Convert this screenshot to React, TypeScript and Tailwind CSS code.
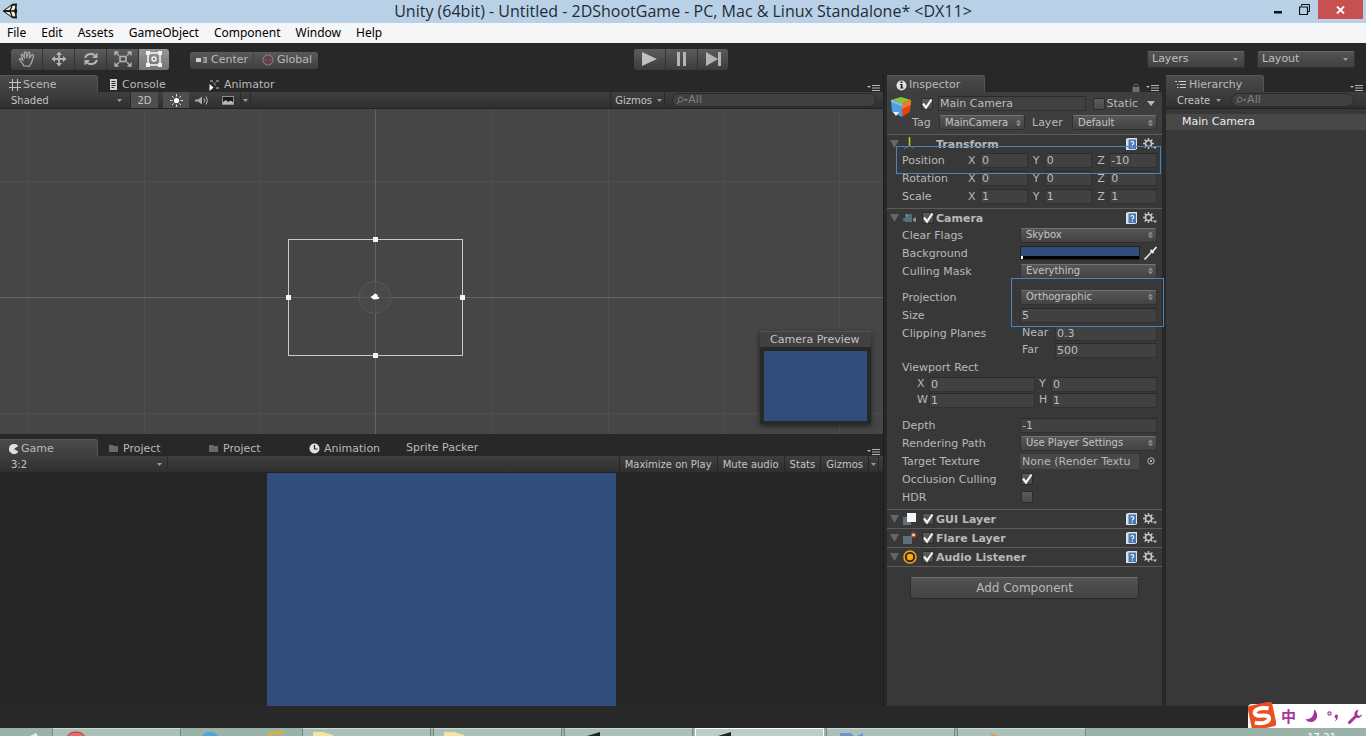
import React from "react";

type Kids = { children?: React.ReactNode };

/* ---------- icons ---------- */

const UnityLogo = () => (
  <svg width="16" height="16" viewBox="0 0 16 16">
    <path d="M0.5 8 L10.5 0.8 L15 0.5 L14.6 5 L15.2 8 L14.6 11 L15 15.500 L10.5 15.2 Z" fill="#161616" />
    <path d="M3.4 7 L9.300 2.8 L7.600 7 Z M3.4 9 L7.600 9 L9.300 13.200 Z M10.600 2.8 L13.2 2.4 L13 5.600 L11.8 7.2 L9 7.200 Z M9 8.8 L11.8 8.8 L13 10.400 L13.2 13.600 L10.600 13.200 Z" fill="#eef2d8" />
  </svg>
);

const HandIcon = () => (
  <svg width="18" height="18" viewBox="0 0 18 18" fill="none" stroke="#a9a9a9" strokeWidth="1.2" strokeLinejoin="round" strokeLinecap="round">
    <path d="M6 16 C4.5 13 2.500 11.5 1.2 9.2 C1.8 8 3.3 8.500 5 10.5 L3.2 5 C3.3 3.6 4.6 3.7 5.1 5 L6.6 8.2 L6.3 2.8 C6.8 1.4 8 1.6 8.3 2.9 L9 7.7 L10.2 2.6 C10.8 1.5 12 1.9 11.9 3.2 L11.4 8.2 L13.8 4.9 C14.8 4.2 16 5 15.5 6.2 L14 11 C13.5 13.3 12.2 14.6 11.5 16.2 Z" />
  </svg>
);

const MoveIcon = () => (
  <svg width="16" height="16" viewBox="0 0 16 16" fill="#b4b4b4">
    <path d="M8 0.5 L11 4 H8.9 V7.1 H12 V5 L15.5 8 L12 11 V8.9 H8.9 V12 H11 L8 15.5 L5 12 H7.1 V8.9 H4 V11 L0.5 8 L4 5 V7.1 H7.1 V4 H5 Z" />
  </svg>
);

const RotateIcon = () => (
  <svg width="16" height="16" viewBox="0 0 16 16">
    <path d="M2.2 7 C2.8 3.4 8 1.6 11.8 4.2 M13.8 9 C13.2 12.6 8 14.4 4.2 11.8" fill="none" stroke="#b4b4b4" strokeWidth="2" />
    <path d="M14.5 1.5 V7 H9 Z M1.5 14.5 V9 H7 Z" fill="#b4b4b4" />
  </svg>
);

const ScaleIcon = () => (
  <svg width="18" height="16" viewBox="0 0 18 16" fill="none" stroke="#b4b4b4">
    <rect x="6" y="5.5" width="6" height="5" strokeWidth="1.6" />
    <path d="M5 4.5 L1 1 M13 4.5 L17 1 M5 11.5 L1 15 M13 11.5 L17 15 M1 4.5 V1 H4.5 M13.5 1 H17 V4.5 M1 11.5 V15 H4.5 M13.5 15 H17 V11.5" strokeWidth="1.3" />
  </svg>
);

const RectIcon = () => (
  <svg width="18" height="18" viewBox="0 0 18 18">
    <rect x="3" y="3" width="12" height="12" fill="none" stroke="#f2f2f2" strokeWidth="1.6" />
    <circle cx="9" cy="9" r="2" fill="none" stroke="#f2f2f2" strokeWidth="1.4" />
    <path d="M1 1h4v4H1z M13 1h4v4h-4z M1 13h4v4H1z M13 13h4v4h-4z" fill="#f2f2f2" />
  </svg>
);

const PivotIcon = () => (
  <svg width="12" height="8" viewBox="0 0 12 8">
    <path d="M0 2h5v4H0z" fill="#d0d0d0" />
    <path d="M7 1h4v6H7V5.500h2.500v-1H7v-1h2.500v-1H7z" fill="#a2a2a2" />
  </svg>
);

const GlobeIcon = () => (
  <svg width="12" height="12" viewBox="0 0 12 12" fill="none">
    <circle cx="6" cy="6" r="5" fill="#5a3a40" stroke="#9a8a8c" />
    <path d="M6 1 C3 4 3 8 6 11 M6 1 C9 4 9 8 6 11 M1 6 H11" stroke="#7b5a60" strokeWidth="0.8" />
  </svg>
);

const GridIcon = () => (
  <svg width="12" height="12" viewBox="0 0 12 12" stroke="#c2c2c2" strokeWidth="1">
    <path d="M3.5 0V12 M8.5 0V12 M0 3.5H12 M0 8.5H12" />
  </svg>
);

const ConsoleIcon = () => (
  <svg width="9" height="11" viewBox="0 0 9 11">
    <path d="M1 0H8V11H1Z" fill="#d2d2d2" />
    <path d="M2.5 2.5H6.5 M2.5 4.5H6.5 M2.5 6.5H6.5 M2.5 8.5H5" stroke="#2c2c2c" />
  </svg>
);

const AnimatorIcon = () => (
  <svg width="11" height="12" viewBox="0 0 11 12">
    <path d="M0.500 5 L4.500 8.5 L0.500 12Z" fill="#fff" />
    <path d="M1 1h3v2H1z M7 1h3v2H7z M7 8h3v2H7z" fill="#777" />
    <path d="M4 3l3 4 M7 3L5 6" stroke="#777" />
  </svg>
);

const GameIcon = () => (
  <svg width="10" height="10" viewBox="0 0 10 10">
    <path d="M5 0 A5 5 0 1 0 9.300 7.500 L5 5 L9.300 2 A5 5 0 0 0 5 0Z" fill="#dedede" />
  </svg>
);

const FolderIcon = () => (
  <svg width="10" height="9" viewBox="0 0 10 9">
    <path d="M0 1H4L5 2H9V8H0Z" fill="#6a6a6a" />
  </svg>
);

const ClockIcon = () => (
  <svg width="11" height="11" viewBox="0 0 11 11">
    <circle cx="5.5" cy="5.5" r="5" fill="#e2e2e2" />
    <path d="M5.5 2V6H8.5" stroke="#222" fill="none" strokeWidth="1.2" />
  </svg>
);

const InfoIcon = () => (
  <svg width="11" height="11" viewBox="0 0 11 11">
    <circle cx="5.5" cy="5.5" r="5" fill="#e2e2e2" />
    <path d="M4.500 1.500h2v1.5h-2z M4 4h2.500v3.500h1v1H4v-1h0.800v-2.500H4z" fill="#222" />
  </svg>
);

const ListIcon = () => (
  <svg width="12" height="10" viewBox="0 0 12 10" stroke="#cfcfcf">
    <path d="M0 1.5H2 M3.5 1.5H11 M2 4.5H3.5 M5 4.5H11 M2 7.5H3.5 M5 7.5H11" />
  </svg>
);

const LockIcon = () => (
  <svg width="8" height="9" viewBox="0 0 8 9">
    <path d="M2 4V2.5C2 0.5 6 0.5 6 2.5V4" stroke="#6f6f6f" fill="none" />
    <path d="M0.5 4H7.5V9H0.5Z" fill="#6f6f6f" />
  </svg>
);

const PaneMenuIcon = () => (
  <svg width="14" height="8" viewBox="0 0 14 8">
    <path d="M0 2H4L2 4Z" fill="#b4b4b4" />
    <path d="M5 1.5H13 M5 4H13 M5 6.5H13" stroke="#b4b4b4" />
  </svg>
);

const Caret = ({ className = "" }: { className?: string }) => (
  <svg width="5" height="3" viewBox="0 0 5 3" className={className}>
    <path d="M0 0H5L2.5 3Z" fill="#9a9a9a" />
  </svg>
);

const UpDown = () => (
  <svg width="5" height="7" viewBox="0 0 5 7" className="pointer-events-none absolute right-1 top-1/2 -translate-y-1/2">
    <path d="M0 3L2.5 0L5 3Z M0 4H5L2.5 7Z" fill="#8f8f8f" />
  </svg>
);

const SearchIcon = () => (
  <svg width="12" height="9" viewBox="0 0 12 9" fill="none" stroke="#808080">
    <circle cx="4" cy="3.5" r="2.6" />
    <path d="M2 5.5L0 8" />
    <path d="M7.5 3H11.5L9.5 5.5Z" fill="#808080" stroke="none" />
  </svg>
);

const SunIcon = () => (
  <svg width="13" height="13" viewBox="0 0 13 13">
    <circle cx="6.5" cy="6.5" r="2.6" fill="#fff" />
    <path d="M6.5 0V2.5 M6.5 10.5V13 M0 6.5H2.5 M10.5 6.5H13 M2 2L3.6 3.6 M9.4 9.4L11 11 M2 11L3.6 9.4 M9.4 3.6L11 2" stroke="#dcdcdc" />
  </svg>
);

const SpeakerIcon = () => (
  <svg width="15" height="11" viewBox="0 0 15 11">
    <path d="M0 4.5H3L7 1.5V9.5L3 6.5H0Z" fill="#a9a9a9" />
    <path d="M9 3.5Q10.5 5.5 9 7.5 M11 1.500Q14 5.5 11 9.5" fill="none" stroke="#c4c4c4" />
  </svg>
);

const PictureIcon = () => (
  <svg width="12" height="9" viewBox="0 0 12 9">
    <rect x="0.5" y="0.5" width="11" height="8" fill="#1a1a1a" stroke="#8f8f8f" />
    <path d="M1 8V6L4 4L6 6L8.5 4.5L11 6V8Z" fill="#b8b8b8" />
  </svg>
);

const CubeIcon = () => (
  <svg width="22" height="22" viewBox="0 0 22 22">
    <path d="M1 4 L11 1 L21 4 L12 7.5Z" fill="#86c440" />
    <path d="M1 4 L12 7.5 L12 21 L2 16Z" fill="#4f9fe0" />
    <path d="M12 7.5 L21 4 L20 16 L12 21Z" fill="#dd4614" />
    <path d="M12 7.5 L21 4 L20.7 9 L12 13Z" fill="#f07a2a" />
    <path d="M1 4 L12 7.5 L12 10 L1 6Z" fill="#7cc3ee" />
    <path d="M3 16H9L6 20Z" fill="#f1f1f1" />
  </svg>
);

const HelpBook = () => (
  <svg width="11" height="12" viewBox="0 0 11 12">
    <path d="M0 1L2 0H11V11L9 12H0Z" fill="#d7e2ee" />
    <path d="M2.500 1.500H10V11H2.500Z" fill="#4878b4" />
    <path d="M4.700 4.6C4.900 3 7.8 3 7.8 4.9C7.8 6.2 6.2 6.2 6.2 7.4 M6.2 8.6V9.8" stroke="#fff" strokeWidth="1.100" fill="none" />
  </svg>
);

const GearIcon = () => (
  <svg width="14" height="12" viewBox="0 0 14 12">
    <circle cx="5.5" cy="5.5" r="3" fill="none" stroke="#c6c6c6" strokeWidth="1.6" />
    <path d="M5.5 0V2.5 M5.5 8.5V11 M0 5.5H2.5 M8.5 5.5H11 M1.6 1.6L3.4 3.4 M7.6 7.6L9.4 9.4 M1.6 9.4L3.4 7.6 M7.6 3.4L9.4 1.6" stroke="#c6c6c6" strokeWidth="1.4" />
    <path d="M10 8.5H14L12 11Z" fill="#c6c6c6" />
  </svg>
);

const AxesIcon = () => (
  <svg width="14" height="14" viewBox="0 0 14 14">
    <path d="M6.5 0V9" stroke="#c3c928" strokeWidth="1.6" />
    <path d="M6 9L12 12" stroke="#a83c34" />
    <path d="M6 9L1 12" stroke="#4878b4" />
  </svg>
);

const CameraIcon = () => (
  <svg width="14" height="10" viewBox="0 0 14 10">
    <path d="M2 4H9V9H2Z M0 5H2V8H0Z" fill="#56707e" />
    <circle cx="4" cy="2.5" r="1.8" fill="#6c8794" />
    <circle cx="7.5" cy="2.5" r="1.8" fill="#56707e" />
    <path d="M10 6L13 4V9L10 8Z" fill="#7c97a4" />
  </svg>
);

const GuiLayerIcon = () => (
  <svg width="14" height="12" viewBox="0 0 14 12">
    <path d="M0 4H8V12H0Z" fill="#66707a" />
    <path d="M4 0H13V9H4Z" fill="#f6f6f6" />
  </svg>
);

const FlareIcon = () => (
  <svg width="14" height="12" viewBox="0 0 14 12">
    <path d="M0 4H9V12H0Z" fill="#5c6f7f" />
    <circle cx="10.5" cy="3" r="2.8" fill="#a5502a" />
    <circle cx="10.5" cy="3" r="1.3" fill="#ffe2c0" />
  </svg>
);

const AudioIcon = () => (
  <svg width="14" height="14" viewBox="0 0 14 14">
    <circle cx="7" cy="7" r="6" fill="#3a2a10" stroke="#f0a224" strokeWidth="1.6" />
    <circle cx="7" cy="7" r="3.2" fill="#f7a81c" />
  </svg>
);

const Foldout = () => (
  <svg width="9" height="8" viewBox="0 0 9 8">
    <path d="M0 0H9L4.500 8Z" fill="#666" />
  </svg>
);

const DropperIcon = () => (
  <svg width="13" height="14" viewBox="0 0 13 14">
    <path d="M0.500 13.500L8 5.500" stroke="#e0e0e0" strokeWidth="1.6" />
    <path d="M6.500 4L9.500 7 M8.500 5.500L12.500 1" stroke="#f0f0f0" strokeWidth="1.800" />
  </svg>
);

/* ---------- building blocks ---------- */

function Tab({ icon, children, active }: Kids & { icon?: React.ReactNode; active?: boolean }) {
  return active ? (
    <button className="flex h-[17px] w-[98px] items-center gap-0.5 rounded-tr-[3px] border-t border-r border-[#555] bg-linear-to-b from-[#4a4a4a] to-[#3e3e3e] pt-0.5 pl-[9px] text-left whitespace-nowrap">
      {icon}
      {children}
    </button>
  ) : (
    <button className="flex h-[17px] w-[100px] items-center gap-1 pt-0.5 pl-[11px] text-left whitespace-nowrap">
      {icon}
      {children}
    </button>
  );
}

function TabStrip({ children, locked }: Kids & { locked?: boolean }) {
  return (
    <div className="flex h-[17px] items-end">
      <div className="flex flex-1">{children}</div>
      <div className="flex items-end gap-1.5 pr-0.5">
        {locked && <button aria-label="Lock"><LockIcon /></button>}
        <button aria-label="Pane options"><PaneMenuIcon /></button>
      </div>
    </div>
  );
}

const BAR = "flex h-[17px] items-stretch border-b border-[#222] bg-linear-to-b from-[#3f3f3f] to-[#2f2f2f] text-[10px] text-[#c4c4c4] [&>button]:pt-px";

function SearchBox({ className, label }: { className: string; label: string }) {
  return (
    <label className={className}>
      <SearchIcon />
      <input aria-label={label} placeholder="All" className="w-full min-w-0 bg-transparent text-[11px] leading-3 text-[#aaa] outline-none placeholder:text-[#808080]" />
    </label>
  );
}

function Field({ value, label, className = "" }: { value: string; label: string; className?: string }) {
  return (
    <input
      aria-label={label}
      defaultValue={value}
      className={"h-[15px] min-w-0 flex-1 border border-[#313131] border-t-[#2a2a2a] bg-[#414141] px-px text-[11px] leading-3 text-[#bdbdbd] outline-none " + className}
    />
  );
}

function Drop({ value, label }: { value: string; label: string }) {
  return (
    <div className="relative min-w-0 flex-1">
      <select aria-label={label} className="block h-[15px] w-full appearance-none rounded-[3px] border border-[#303030] border-t-[#727272] bg-linear-to-b from-[#565656] to-[#434343] pl-[5px] text-[10px] leading-3 text-[#c4c4c4]">
        <option>{value}</option>
      </select>
      <UpDown />
    </div>
  );
}

function Check({ on, label }: { on?: boolean; label: string }) {
  return (
    <span className="relative block size-3 shrink-0">
      <input
        type="checkbox"
        defaultChecked={on}
        aria-label={label}
        className="peer block size-3 appearance-none rounded-[2px] border border-[#2b2b2b] bg-linear-to-b from-[#5c5c5c] to-[#4a4a4a]"
      />
      <svg width="12" height="12" viewBox="0 0 12 12" className="pointer-events-none absolute inset-0 hidden peer-checked:block">
        <path d="M2 5.500L5 9.500L10.500 1.500" fill="none" stroke="#f4f4f4" strokeWidth="2.200" />
      </svg>
    </span>
  );
}

function Row({ label, children, tight }: Kids & { label: string; tight?: boolean }) {
  return (
    <div className={"flex items-center pr-[5px] pl-[15px] " + (tight ? "h-4" : "h-[18px]")}>
      <span className="w-[118px] shrink-0 pt-px whitespace-nowrap">{label}</span>
      {children}
    </div>
  );
}

function VectorRow({ label, values }: { label: string; values: string[] }) {
  return (
    <div className="flex h-[18px] items-center pr-[5px] pl-[15px]">
      <span className="w-[66px] shrink-0 pt-px">{label}</span>
      <div className="flex min-w-0 flex-1 gap-[5px]">
        {["X", "Y", "Z"].map((axis, i) => (
          <label key={axis} className="flex min-w-0 flex-1 items-center">
            <span className="w-3 shrink-0 pt-px">{axis}</span>
            <Field value={values[i]} label={label + " " + axis} />
          </label>
        ))}
      </div>
    </div>
  );
}

function ComponentHeader({ icon, title, check = true }: { icon: React.ReactNode; title: string; check?: boolean }) {
  return (
    <div className="flex h-[19px] items-center border-t border-[#5c5c5c] pr-[5px] pl-[3px]">
      <button aria-label={"Fold " + title} className="w-[13px]"><Foldout /></button>
      <span className="flex w-[19px]">{icon}</span>
      <span className="w-3.5">{check && <Check on label={title + " enabled"} />}</span>
      <h2 className="flex-1 pt-0.5 text-[11px] font-bold">{title}</h2>
      <button aria-label={title + " help"} className="mr-1.5"><HelpBook /></button>
      <button aria-label={title + " settings"}><GearIcon /></button>
    </div>
  );
}

/* ---------- panels ---------- */

function SceneView() {
  const vertical = [28, 144, 260, 492, 608, 724, 839];
  return (
    <div className="relative min-h-[200px] grow-[325] basis-0 overflow-hidden bg-[#464646]">
      <svg className="absolute inset-0 h-full w-full" viewBox="0 0 884 325" preserveAspectRatio="xMidYMid slice" shapeRendering="crispEdges">
        {vertical.map((x) => (
          <path key={x} d={`M${x}.5 0V325`} stroke="#4f4f4f" />
        ))}
        <path d="M0 72.5H884 M0 304.5H884" stroke="#4f4f4f" />
        <path d="M375.5 0V325 M0 188.5H884" stroke="#636363" />
        <rect x="288.5" y="130.5" width="174" height="116" fill="none" stroke="#c9c9c9" />
        <circle cx="375.500" cy="188.500" r="16" fill="#4b4b4b" fillOpacity="0.600" stroke="#585858" shapeRendering="auto" />
        <path d="M371 188L374 186L375 184.500L378 185.500L378 187.500L380 188.500L379 190L374 190.500Z" fill="#fff" shapeRendering="auto" />
        <path d="M373 128h5v5h-5z M373 244h5v5h-5z M286 186h5v5h-5z M460 186h5v5h-5z" fill="#f4f4f4" />
      </svg>
      <div className="absolute right-3 bottom-2.5 w-[111px] border-t border-[#555] bg-[#282828] shadow-[0_2px_5px_#222]">
        <div className="h-[15px] bg-[#414141] pl-2.5 text-[11px] leading-[15px] whitespace-nowrap text-[#c4c4c4]">Camera Preview</div>
        <div className="px-1 pt-1 pb-[3px]"><div className="h-[70px] bg-[#314d79]" /></div>
      </div>
    </div>
  );
}

function LeftColumn() {
  return (
    <div className="flex min-w-0 flex-1 flex-col border-r border-[#1c1c1c]">
      <TabStrip>
        <Tab active icon={<GridIcon />}>Scene</Tab>
        <Tab icon={<ConsoleIcon />}>Console</Tab>
        <Tab icon={<AnimatorIcon />}>Animator</Tab>
      </TabStrip>
      <div className={BAR}>
        <button className="flex w-[131px] items-center justify-between border-r border-[#2a2a2a] pr-2 pl-[11px]">Shaded <Caret /></button>
        <button className="w-[27px] bg-[#4e4e4e]">2D</button>
        <button aria-label="Lighting" className="ml-[5px] flex w-[26px] items-center justify-center bg-[#4e4e4e]"><SunIcon /></button>
        <button aria-label="Audio" className="flex w-[27px] items-center justify-center"><SpeakerIcon /></button>
        <button aria-label="Effects" className="ml-1.5 flex items-center gap-1.5">
          <PictureIcon />
          <span className="flex h-full items-center border-x border-[#2a2a2a] px-0.5"><Caret /></span>
        </button>
        <span className="flex-1" />
        <button className="flex items-center gap-[5px] border-x border-[#2a2a2a] pr-0.5 pl-1">Gizmos <Caret /></button>
        <SearchBox label="Search scene" className="mx-[7px] my-px flex w-[204px] items-center rounded-full border border-[#2b2b2b] bg-[#404040] pl-1" />
      </div>
      <SceneView />
      <div className="h-[5px] shrink-0" />
      <TabStrip>
        <Tab active icon={<GameIcon />}>Game</Tab>
        <Tab icon={<FolderIcon />}>Project</Tab>
        <Tab icon={<FolderIcon />}>Project</Tab>
        <Tab icon={<ClockIcon />}>Animation</Tab>
        <button className="pl-2">Sprite Packer</button>
      </TabStrip>
      <div className={BAR}>
        <button className="flex w-[168px] items-center justify-between border-r border-[#2a2a2a] pr-[5px] pl-[11px]">3:2 <Caret /></button>
        <span className="flex-1" />
        <button className="border-l border-[#272727] px-[5px]">Maximize on Play</button>
        <button className="border-l border-[#272727] px-[5px]">Mute audio</button>
        <button className="border-l border-[#272727] px-[5px]">Stats</button>
        <button className="border-l border-[#272727] px-[5px]">Gizmos</button>
        <button aria-label="Gizmo options" className="mr-1 flex items-center border-x border-[#272727] px-0.5"><Caret /></button>
      </div>
      <div className="flex min-h-[150px] grow-[233] basis-0 justify-center bg-[#262626]">
        <div className="aspect-3/2 h-full bg-[#314d79]" />
      </div>
    </div>
  );
}

function Inspector() {
  return (
    <div className="flex w-[275px] shrink-0 flex-col">
      <TabStrip locked>
        <Tab active icon={<InfoIcon />}>Inspector</Tab>
      </TabStrip>
      <div className="flex-1 bg-[#383838]">
        <div className="flex h-[42px] bg-[#3e3e3e] pt-1 pr-[5px] pl-[3px]">
          <CubeIcon />
          <div className="flex min-w-0 flex-1 flex-col gap-1">
            <div className="flex h-[15px] items-center">
              <span className="mr-[5px] ml-[9px]"><Check on label="Active" /></span>
              <Field value="Main Camera" label="Name" />
              <label className="ml-[7px] flex items-center gap-0.5"><Check label="Static" />Static</label>
              <button aria-label="Static options" className="mr-0.5 ml-[9px]">
                <svg width="8" height="5" viewBox="0 0 8 5"><path d="M0 0H8L4 5Z" fill="#b8b8b8" /></svg>
              </button>
            </div>
            <div className="flex h-[15px] items-center">
              <span className="w-[23px] shrink-0">Tag</span>
              <div className="mx-1 flex w-[86px]"><Drop value="MainCamera" label="Tag" /></div>
              <span className="w-[43px] shrink-0 pl-[3px]">Layer</span>
              <Drop value="Default" label="Layer" />
            </div>
          </div>
        </div>

        <section className="pb-[3px]">
          <ComponentHeader title="Transform" icon={<AxesIcon />} check={false} />
          <div className="relative -mt-0.5">
            <VectorRow label="Position" values={["0", "0", "-10"]} />
            <div className="pointer-events-none absolute -top-[5px] right-px left-[9px] h-7 border border-[#4784c0]" />
          </div>
          <VectorRow label="Rotation" values={["0", "0", "0"]} />
          <VectorRow label="Scale" values={["1", "1", "1"]} />
        </section>

        <section className="pb-[3px]">
          <ComponentHeader title="Camera" icon={<CameraIcon />} />
          <div className="-mt-px">
            <Row label="Clear Flags"><Drop value="Skybox" label="Clear Flags" /></Row>
          </div>
          <Row label="Background">
            <button aria-label="Background color" className="h-3.5 flex-1 border border-[#222] bg-[#314d79]">
              <span className="mt-[9px] block h-[3px] bg-black"><span className="block h-[3px] w-0.5 bg-white" /></span>
            </button>
            <button aria-label="Pick color" className="ml-1"><DropperIcon /></button>
          </Row>
          <Row label="Culling Mask"><Drop value="Everything" label="Culling Mask" /></Row>
          <div className="relative mt-2">
            <Row label="Projection"><Drop value="Orthographic" label="Projection" /></Row>
            <Row label="Size"><Field value="5" label="Size" /></Row>
            <div className="pointer-events-none absolute -top-[10px] -right-0.5 -bottom-[3px] left-[124px] border border-[#4784c0]" />
          </div>
          <Row label="Clipping Planes">
            <label className="flex min-w-0 flex-1 items-center pl-0.5"><span className="w-[33px]">Near</span><Field value="0.3" label="Near" /></label>
          </Row>
          <Row label="" tight>
            <label className="flex min-w-0 flex-1 items-center pl-0.5"><span className="w-[33px]">Far</span><Field value="500" label="Far" /></label>
          </Row>
          <Row label="Viewport Rect" />
          {[["X", "0", "Y", "0"], ["W", "1", "H", "1"]].map(([a, av, b, bv]) => (
            <div key={a} className="flex h-4 items-center gap-1 pr-[5px] pl-[30px]">
              <label className="flex min-w-0 flex-1 items-center"><span className="w-3">{a}</span><Field value={av} label={"Viewport " + a} /></label>
              <label className="flex min-w-0 flex-1 items-center"><span className="w-3">{b}</span><Field value={bv} label={"Viewport " + b} /></label>
            </div>
          ))}
          <div className="mt-2">
            <Row label="Depth"><Field value="-1" label="Depth" /></Row>
          </div>
          <Row label="Rendering Path"><Drop value="Use Player Settings" label="Rendering Path" /></Row>
          <Row label="Target Texture">
            <div className="mr-2 h-[15px] min-w-0 flex-1 overflow-hidden bg-[#484848] pl-0.5 leading-[15px] whitespace-nowrap">None (Render Textu</div>
            <button aria-label="Select texture" className="mr-0.5">
              <svg width="8" height="8" viewBox="0 0 8 8"><circle cx="4" cy="4" r="3.200" fill="none" stroke="#b8b8b8" /><circle cx="4" cy="4" r="1" fill="#d8d8d8" /></svg>
            </button>
          </Row>
          <Row label="Occlusion Culling"><span className="pl-px"><Check on label="Occlusion Culling" /></span></Row>
          <Row label="HDR"><span className="pl-px"><Check label="HDR" /></span></Row>
        </section>

        <ComponentHeader title="GUI Layer" icon={<GuiLayerIcon />} />
        <ComponentHeader title="Flare Layer" icon={<FlareIcon />} />
        <ComponentHeader title="Audio Listener" icon={<AudioIcon />} />
        <div className="border-t border-[#5c5c5c] px-[23px] pt-2.5 pb-4">
          <button className="h-[22px] w-full rounded-[3px] border border-[#2c2c2c] border-t-[#6e6e6e] bg-linear-to-b from-[#525252] to-[#434343] text-[12px]">Add Component</button>
        </div>
      </div>
    </div>
  );
}

function Hierarchy() {
  return (
    <div className="ml-px flex w-[200px] shrink-0 flex-col">
      <TabStrip>
        <Tab active icon={<ListIcon />}>Hierarchy</Tab>
      </TabStrip>
      <div className={BAR}>
        <button className="flex items-center gap-1.5 pr-1 pl-[11px]">Create <Caret /></button>
        <SearchBox label="Search hierarchy" className="my-px mr-3 ml-1.5 flex min-w-0 flex-1 items-center rounded-full border border-[#2b2b2b] bg-[#404040] pl-1" />
      </div>
      <div className="flex-1 bg-[#383838] pt-[5px]">
        <button className="block h-4 w-full bg-[#484848] pl-4 text-left leading-4 text-[#ececec]">Main Camera</button>
      </div>
    </div>
  );
}

function TopSelect({ value }: { value: string }) {
  return (
    <div className="relative w-[98px]">
      <select aria-label={value} className="block h-[17px] w-full appearance-none rounded-[2px] border border-[#333] border-t-[#666] bg-linear-to-b from-[#535353] to-[#404040] pl-1 text-[11px] leading-3.5 text-[#c0c0c0]">
        <option>{value}</option>
      </select>
      <Caret className="pointer-events-none absolute top-[7px] right-[7px]" />
    </div>
  );
}

function Toolbar() {
  const tools = [
    { name: "Hand", icon: <HandIcon /> },
    { name: "Move", icon: <MoveIcon /> },
    { name: "Rotate", icon: <RotateIcon /> },
    { name: "Scale", icon: <ScaleIcon /> },
  ];
  const cell = "flex h-[21px] w-8 items-center justify-center border-r border-[#333] bg-linear-to-b from-[#5c5c5c] to-[#3c3c3c]";
  return (
    <div className="grid h-8 grid-cols-[1fr_auto_1fr] items-center pr-[11px] pl-[7px]">
      <div className="flex items-center gap-[21px] pl-1">
        <div className="flex overflow-hidden rounded-[3px]">
          {tools.map((t) => (
            <button key={t.name} aria-label={t.name} className={cell}>{t.icon}</button>
          ))}
          <button aria-label="Rect" className="flex h-[21px] w-[30px] items-center justify-center bg-linear-to-b from-[#969696] to-[#757575]"><RectIcon /></button>
        </div>
        <div className="mt-0.5 flex h-[17px] overflow-hidden rounded-[3px] bg-linear-to-b from-[#5a5a5a] to-[#3e3e3e]">
          <button className="flex w-16 items-center gap-[3px] border-r border-[#444] pl-1.5"><PivotIcon />Center</button>
          <button className="flex w-16 items-center gap-[3px] pl-2"><GlobeIcon />Global</button>
        </div>
      </div>
      <div className="flex overflow-hidden rounded-[3px]">
        <button aria-label="Play" className={cell}><svg width="15" height="14" viewBox="0 0 15 14"><path d="M0 0L15 7L0 14Z" fill="#c0c0c0" /></svg></button>
        <button aria-label="Pause" className={cell}><svg width="10" height="14" viewBox="0 0 10 14"><path d="M0 0H3V14H0Z M6 0H9V14H6Z" fill="#b4b4b4" /></svg></button>
        <button aria-label="Step" className="flex h-[21px] w-[30px] items-center justify-center bg-linear-to-b from-[#5c5c5c] to-[#3c3c3c]"><svg width="15" height="14" viewBox="0 0 15 14"><path d="M0 0L12 7L0 14Z M12 0H15V14H12Z" fill="#b4b4b4" /></svg></button>
      </div>
      <div className="flex justify-end gap-3">
        <TopSelect value="Layers" />
        <TopSelect value="Layout" />
      </div>
    </div>
  );
}

function TitleBar() {
  return (
    <header className="relative flex h-[23px] items-center justify-center bg-[#b9d1e6] font-['Open_Sans','Noto_Sans',sans-serif] text-[#222c36]">
      <span className="absolute top-[3px] left-[2px]"><UnityLogo /></span>
      <h1 className="text-[16px] leading-[23px] whitespace-nowrap">Unity (64bit) - Untitled - 2DShootGame - PC, Mac &amp; Linux Standalone* &lt;DX11&gt;</h1>
      <div className="absolute top-0 right-[3px] flex">
        <button aria-label="Minimize" className="flex h-[19px] w-7 items-center justify-center"><svg width="8" height="12" viewBox="0 0 8 12"><path d="M0 7H8V9.500H0Z" fill="#111" /></svg></button>
        <button aria-label="Restore" className="flex h-[19px] w-6 items-center justify-center"><svg width="11" height="11" viewBox="0 0 11 11" fill="none" stroke="#111"><path d="M2.500 2.500V0.500H10.500V7.500H8.500" /><path d="M0.500 3H8 M0.500 2.500V10.500H8.500V2.500" strokeWidth="1.200" /></svg></button>
        <button aria-label="Close" className="ml-0.5 flex h-[19px] w-[45px] items-center justify-center bg-[#c75050]"><svg width="9" height="8" viewBox="0 0 9 8"><path d="M1 0.500L8 7.500M8 0.500L1 7.500" stroke="#fff" strokeWidth="1.800" /></svg></button>
      </div>
    </header>
  );
}

const taskButton = "relative h-2 w-[129px] shrink-0 overflow-hidden border border-b-0 border-[#6e8a80] border-t-[#c9dad3] bg-[#a9c1b8]";

function Taskbar() {
  return (
    <footer className="relative flex h-2 shrink-0 gap-[2px] overflow-hidden bg-[#9ab3a9]">
      <svg width="50" height="8" viewBox="0 0 50 8" className="shrink-0"><path d="M30 8L36 5L38 8Z" fill="#e8efeb" /></svg>
      <button aria-label="Browser" className={taskButton}><svg width="40" height="7" viewBox="0 0 40 7"><ellipse cx="23" cy="9" rx="9" ry="6" fill="#ec6a6a" stroke="#a33" /></svg></button>
      <svg width="117" height="8" viewBox="0 0 117 8" className="shrink-0">
        <ellipse cx="27" cy="9" rx="8" ry="5" fill="#4aa6dc" />
        <path d="M86 8C90 4 94 4 100 5" stroke="#e0b02c" strokeWidth="3" fill="none" />
      </svg>
      <button aria-label="Folder" className={taskButton}><svg width="40" height="7" viewBox="0 0 40 7"><path d="M10 7V3H20L30 6V7Z" fill="#f3e4a0" /></svg></button>
      <button aria-label="Folder" className={taskButton}><svg width="40" height="7" viewBox="0 0 40 7"><path d="M10 7V3H20L30 6V7Z" fill="#f3e4a0" /></svg></button>
      <button aria-label="Unity" className={taskButton}><svg width="40" height="7" viewBox="0 0 40 7"><path d="M22 7L35 3V7Z" fill="#1f2523" /></svg></button>
      <button aria-label="Unity" className="relative h-2 w-[129px] shrink-0 overflow-hidden border border-b-0 border-white bg-[#bccdc6]"><svg width="40" height="7" viewBox="0 0 40 7"><path d="M22 7L35 3V7Z" fill="#1f2523" /></svg></button>
      <button aria-label="Notes" className={taskButton}><svg width="40" height="7" viewBox="0 0 40 7"><path d="M13 7V4H24L27 7Z M30 7L36 4V7Z" fill="#6f93cf" /></svg></button>
      <button aria-label="Player" className={taskButton}><svg width="50" height="7" viewBox="0 0 50 7"><path d="M32 4L40 7H34Z" fill="#e59545" /></svg></button>
      <time className="absolute top-1 right-[30px] text-[10px] leading-3 text-white">17:21</time>
    </footer>
  );
}

function InputMethodBar() {
  return (
    <div className="absolute right-0 bottom-0 flex h-6 w-[118px] items-center gap-[9px] rounded-tl-sm bg-white pr-1 text-[#a3379b]">
      <svg width="28" height="28" viewBox="0 0 28 28" className="shrink-0">
        <g transform="rotate(-12 14 14)">
          <rect x="1.500" y="1.500" width="25" height="25" rx="3" fill="#e8501f" />
          <path d="M22 8C15 5 7.500 6 7.500 10C7.500 14.800 20.500 12.500 20.500 17C20.500 22 12 22 5.500 19" fill="none" stroke="#fff" strokeWidth="4" />
        </g>
      </svg>
      <span className="-ml-1 font-['Noto_Sans_CJK_SC',sans-serif] text-[15px] leading-4 font-bold">中</span>
      <svg width="13" height="14" viewBox="0 0 13 14" className="shrink-0"><path d="M9 0.500C14 4 13 12 6.500 13C3.500 13.300 1.500 12 0.500 10C5.500 11 9.500 7 9 0.500Z" fill="currentColor" /></svg>
      <svg width="12" height="12" viewBox="0 0 12 12" className="shrink-0"><circle cx="2.500" cy="3.500" r="1.600" fill="none" stroke="currentColor" strokeWidth="1.200" /><path d="M8 5.500A1.600 1.600 0 1 1 10.800 7C10.800 9 9.500 11 7.500 11.500C8.500 10.500 9 9.500 9 8.200A1.600 1.600 0 0 1 8 5.500Z" fill="currentColor" /></svg>
      <svg width="15" height="15" viewBox="0 0 15 15" className="shrink-0"><path d="M1.500 13.500L7.500 7.500" stroke="currentColor" strokeWidth="3" strokeLinecap="round" /><path d="M10.500 0.800C7 1.200 5.500 4.500 7 7.500C9 10 13 9 14.300 5.500L11 7L9 5Z" fill="currentColor" /></svg>
    </div>
  );
}

export default function App() {
  return (
    <div className="flex min-h-screen flex-col bg-[#282828] font-['DejaVu_Sans',sans-serif] text-[11px] leading-[14px] text-[#b9b9b9]">
      <TitleBar />
      <nav className="flex h-5 items-center gap-[15px] bg-[#f5f6f7] pl-[7px] font-['Noto_Sans','Noto_Sans_CJK_SC',sans-serif] text-[12px] text-black">
        {["File", "Edit", "Assets", "GameObject", "Component", "Window", "Help"].map((item) => (
          <button key={item}>{item}</button>
        ))}
      </nav>
      <Toolbar />
      <main className="flex flex-1 gap-[3px]">
        <LeftColumn />
        <Inspector />
        <Hierarchy />
      </main>
      <div className="relative h-[22px] shrink-0">
        <InputMethodBar />
      </div>
      <Taskbar />
    </div>
  );
}
